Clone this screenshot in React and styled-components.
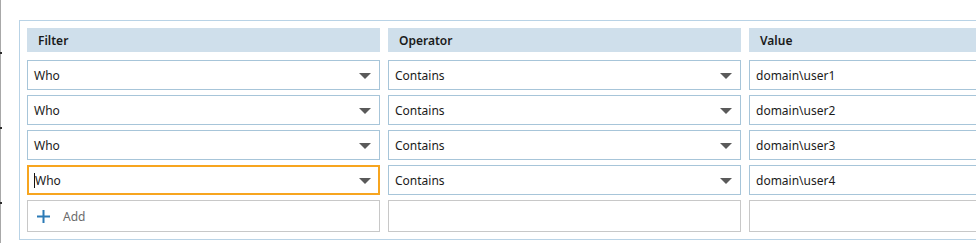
import React from "react";
import styled, { createGlobalStyle, css } from "styled-components";

const Global = createGlobalStyle`
  html, body { margin: 0; padding: 0; background: #ffffff; overflow: hidden; }
  body { font-family: "Noto Sans", "Open Sans", sans-serif; font-size: 12px; color: #1b1b1b; }
`;

const Page = styled.div`
  display: flex;
  width: 976px;
  height: 243px;
  overflow: hidden;
`;

const Gutter = styled.div`
  flex: 0 0 19px;
  height: 243px;
  background:
    linear-gradient(#2b2b2b, #2b2b2b) 0 52px / 2px 2px no-repeat,
    linear-gradient(#2b2b2b, #2b2b2b) 0 127px / 2px 2px no-repeat,
    linear-gradient(#2b2b2b, #2b2b2b) 0 202px / 2px 2px no-repeat,
    linear-gradient(#a8a8a8, #a8a8a8) 0 0 / 1px 100% no-repeat;
`;

const Panel = styled.div`
  margin-top: 20px;
  align-self: flex-start;
  border: 1px solid #b9d3e6;
  border-right: none;
  padding: 7px;
  display: flex;
  flex-direction: column;
  gap: 5px;
  flex: 0 0 auto;
`;

const Row = styled.div`
  display: grid;
  grid-template-columns: 353px 353px 353px;
  column-gap: 8px;
`;

const HeaderRow = styled(Row)`
  margin-bottom: 3px;
`;

const HeaderCell = styled.div`
  height: 24px;
  background: #cfdfeb;
  display: flex;
  align-items: center;
  padding-left: 11px;
  font-weight: 600;
  color: #1a1a1a;
`;

const Field = styled.div`
  box-sizing: border-box;
  height: ${(p) => (p.$tall ? 32 : 30)}px;
  border: 1px solid ${(p) => (p.$muted ? "#c8c8c8" : "#a7c5d9")};
  padding: 0 8px 0 6px;
  display: flex;
  align-items: center;
  background: #fff;
  ${(p) =>
    p.$focused &&
    css`
      border: 2px solid #f7a51f;
      padding: 0 7px 0 5px;
    `}
`;

const FieldText = styled.span`
  flex: 1;
  white-space: nowrap;
  display: flex;
  align-items: center;
`;

const Caret = styled.span`
  display: inline-block;
  width: 1px;
  height: 15px;
  background: #111;
`;

const Arrow = styled.span`
  width: 0;
  height: 0;
  border-left: 6px solid transparent;
  border-right: 6px solid transparent;
  border-top: 6px solid #5a5a5a;
  margin-top: 1px;
`;

const AddButton = styled(Field)`
  padding-left: 8px;
  gap: 12px;
  cursor: pointer;
`;

const AddLabel = styled.span`
  color: #6b6b6b;
`;

const PlusIcon = () => (
  <svg width="15" height="15" viewBox="0 0 15 15">
    <path d="M7.5 1v13M1 7.5h13" stroke="#2b7ab6" strokeWidth="2" fill="none" />
  </svg>
);

const rows = [
  { filter: "Who", op: "Contains", value: "domain\\user1" },
  { filter: "Who", op: "Contains", value: "domain\\user2" },
  { filter: "Who", op: "Contains", value: "domain\\user3" },
  { filter: "Who", op: "Contains", value: "domain\\user4", focused: true },
];

const Select = ({ text, focused }) => (
  <Field $focused={focused}>
    <FieldText>
      {focused && <Caret />}
      {text}
    </FieldText>
    <Arrow />
  </Field>
);

export default function App() {
  return (
    <>
      <Global />
      <Page>
        <Gutter />
        <Panel>
          <HeaderRow>
            <HeaderCell>Filter</HeaderCell>
            <HeaderCell>Operator</HeaderCell>
            <HeaderCell>Value</HeaderCell>
          </HeaderRow>
          {rows.map((r, i) => (
            <Row key={i}>
              <Select text={r.filter} focused={r.focused} />
              <Select text={r.op} />
              <Field>
                <FieldText>{r.value}</FieldText>
              </Field>
            </Row>
          ))}
          <Row>
            <AddButton $muted $tall>
              <PlusIcon />
              <AddLabel>Add</AddLabel>
            </AddButton>
            <Field $muted $tall />
            <Field $muted $tall />
          </Row>
        </Panel>
      </Page>
    </>
  );
}
